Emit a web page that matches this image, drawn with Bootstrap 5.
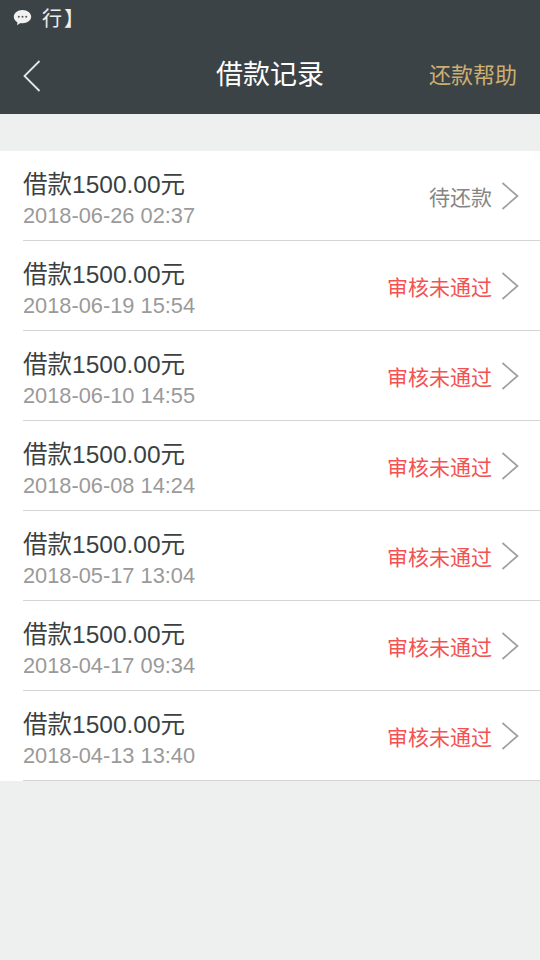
<!DOCTYPE html>
<html lang="zh">
<head>
<meta charset="utf-8">
<link rel="stylesheet" href="https://cdn.jsdelivr.net/npm/bootstrap@5.3.0/dist/css/bootstrap.min.css">
<style>
html,body{height:100%}
body{background:#eef0ef;font-family:"Liberation Sans","Noto Sans CJK SC",sans-serif;width:540px;height:960px;overflow:hidden}
.topbar{background:#3c4346;height:114px;color:#fff}
.statusline{height:38px;padding-left:13px;gap:10px;font-size:20px;line-height:38px;color:#eee}
.statusline svg{width:19px;height:18px;margin-top:-2px}
.bracket{margin-left:2px}
.headline{height:76px;padding-left:23px;padding-right:23px}
.headline .back{width:18px;height:32px}
.title{font-size:27px;color:#fff;line-height:1;margin-top:-1px}
.help{font-size:22px;color:#cdb071;line-height:1}
.records{margin-top:37px;background:#fff}
.rec{height:90px;margin-left:23px;border-bottom:1px solid #d5d5d5;padding-right:21px}
.amt{font-size:24.5px;color:#3c3f41;line-height:30px;margin-top:9px}
.when{font-size:21.8px;color:#9a9a9a;line-height:28px;margin-top:2px}
.state{font-size:21px;line-height:1;margin-right:9px;margin-top:3px}
.pending{color:#858585}
.denied{color:#f45252}
.chev{width:18px;height:28px;margin-top:1px}
</style>
</head>
<body>
<div class="topbar">
  <div class="statusline d-flex align-items-center">
    <svg viewBox="0 0 19 18"><path d="M9.5 1C4.6 1 .8 4 .8 7.800c0 2.400 1.500 4.400 3.700 5.600L4 16.300l3.500-2.200c.7.100 1.300.200 2 .200 4.900 0 8.700-3 8.700-6.500S14.400 1 9.500 1z" fill="#f1f1f1"/><circle cx="5.800" cy="7.800" r="1" fill="#555"/><circle cx="9.500" cy="7.800" r="1" fill="#555"/><circle cx="13.200" cy="7.800" r="1" fill="#555"/></svg>
    <span>行<span class="bracket">】</span></span>
  </div>
  <div class="headline d-flex align-items-center justify-content-between position-relative">
    <svg class="back" viewBox="0 0 18 32"><path d="M16.500 1 1.500 16l15 15" fill="none" stroke="#e6e8e8" stroke-width="1.800"/></svg>
    <div class="title position-absolute top-50 start-50 translate-middle">借款记录</div>
    <div class="help">还款帮助</div>
  </div>
</div>
<div class="records">
  <div class="rec d-flex align-items-center justify-content-between"><div><div class="amt">借款1500.00元</div><div class="when">2018-06-26 02:37</div></div><div class="d-flex align-items-center"><span class="state pending">待还款</span><svg class="chev" viewBox="0 0 18 28"><path d="M1.500 1 16.500 14 1.500 27" fill="none" stroke="#9e9e9e" stroke-width="1.700"/></svg></div></div>
  <div class="rec d-flex align-items-center justify-content-between"><div><div class="amt">借款1500.00元</div><div class="when">2018-06-19 15:54</div></div><div class="d-flex align-items-center"><span class="state denied">审核未通过</span><svg class="chev" viewBox="0 0 18 28"><path d="M1.500 1 16.500 14 1.500 27" fill="none" stroke="#9e9e9e" stroke-width="1.700"/></svg></div></div>
  <div class="rec d-flex align-items-center justify-content-between"><div><div class="amt">借款1500.00元</div><div class="when">2018-06-10 14:55</div></div><div class="d-flex align-items-center"><span class="state denied">审核未通过</span><svg class="chev" viewBox="0 0 18 28"><path d="M1.500 1 16.500 14 1.500 27" fill="none" stroke="#9e9e9e" stroke-width="1.700"/></svg></div></div>
  <div class="rec d-flex align-items-center justify-content-between"><div><div class="amt">借款1500.00元</div><div class="when">2018-06-08 14:24</div></div><div class="d-flex align-items-center"><span class="state denied">审核未通过</span><svg class="chev" viewBox="0 0 18 28"><path d="M1.500 1 16.500 14 1.500 27" fill="none" stroke="#9e9e9e" stroke-width="1.700"/></svg></div></div>
  <div class="rec d-flex align-items-center justify-content-between"><div><div class="amt">借款1500.00元</div><div class="when">2018-05-17 13:04</div></div><div class="d-flex align-items-center"><span class="state denied">审核未通过</span><svg class="chev" viewBox="0 0 18 28"><path d="M1.500 1 16.500 14 1.500 27" fill="none" stroke="#9e9e9e" stroke-width="1.700"/></svg></div></div>
  <div class="rec d-flex align-items-center justify-content-between"><div><div class="amt">借款1500.00元</div><div class="when">2018-04-17 09:34</div></div><div class="d-flex align-items-center"><span class="state denied">审核未通过</span><svg class="chev" viewBox="0 0 18 28"><path d="M1.500 1 16.500 14 1.500 27" fill="none" stroke="#9e9e9e" stroke-width="1.700"/></svg></div></div>
  <div class="rec d-flex align-items-center justify-content-between"><div><div class="amt">借款1500.00元</div><div class="when">2018-04-13 13:40</div></div><div class="d-flex align-items-center"><span class="state denied">审核未通过</span><svg class="chev" viewBox="0 0 18 28"><path d="M1.500 1 16.500 14 1.500 27" fill="none" stroke="#9e9e9e" stroke-width="1.700"/></svg></div></div>
</div>
<script src="https://cdn.jsdelivr.net/npm/bootstrap@5.3.0/dist/js/bootstrap.bundle.min.js"></script>
</body>
</html>
